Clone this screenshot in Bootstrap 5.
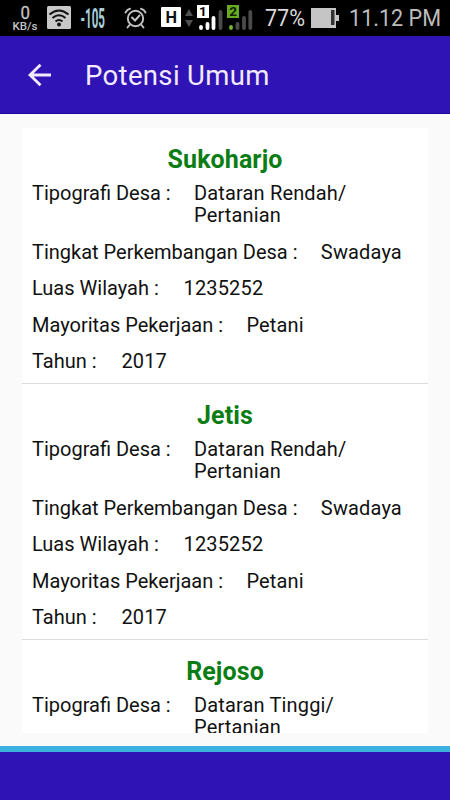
<!DOCTYPE html>
<html lang="id">
<head>
<meta charset="utf-8">
<meta name="viewport" content="width=device-width, initial-scale=1">
<title>Potensi Umum</title>
<link href="https://cdn.jsdelivr.net/npm/bootstrap@5.3.0/dist/css/bootstrap.min.css" rel="stylesheet">
<style>
body{font-family:Roboto,"Liberation Sans",sans-serif;background:#fafafa;color:#111;height:800px}
.status-bar{height:36px;background:#000}
.app-bar{height:78px;background:#3013b5;border-bottom:1px solid #21089a;color:#f3eaff}
.app-title{font-size:27.5px;line-height:36px;letter-spacing:.35px;margin-left:32px;padding-top:2px}
.back-link{margin-left:27px}
.list-area{padding:14px 22px 0;height:632px}
.village-list{height:605px;background:#fff}
.village{height:256px;padding:17px 10px 0;border-bottom:1px solid #dcdcdc}
.village-name{font-size:25px;line-height:30px;font-weight:700;letter-spacing:.1px;color:#0a7d14;margin-bottom:6.7px}
.field{font-size:20px;line-height:22.5px;margin-bottom:14px}
.field dt,.field dd{font-weight:400;white-space:pre-line}
.field dd{margin-left:23.3px;letter-spacing:.15px}
.field .numeric{margin-left:24.8px}
.bottom-bar{height:54px;background:#3013b5;border-top:6px solid #3cb0de}
</style>
<script src="https://cdn.jsdelivr.net/npm/bootstrap@5.3.0/dist/js/bootstrap.bundle.min.js"></script>
</head>
<body class="d-flex flex-column overflow-hidden m-0">
<div class="status-bar flex-shrink-0">
<svg class="d-block" width="450" height="36" viewBox="0 0 450 36" font-family="Roboto, sans-serif">
  <text x="20.500" y="18.800" font-size="18.500" fill="#c4c4c4" stroke="#c4c4c4" stroke-width=".3" textLength="9.500" lengthAdjust="spacingAndGlyphs">0</text>
  <text x="12.500" y="30" font-size="10" font-weight="500" fill="#c4c4c4" textLength="25" lengthAdjust="spacingAndGlyphs">KB/s</text>
  <rect x="47" y="6" width="24" height="23" rx="1.500" fill="#c8c8c8"/>
  <g fill="none" stroke="#111" stroke-width="2"><path d="M49.500 14.500Q59 6.500 68.500 14.500M52.500 18Q59 12.500 65.500 18M55.500 21.500Q59 18.500 62.500 21.500"/></g>
  <circle cx="59" cy="24.500" r="1.900" fill="#111"/>
  <text x="80.500" y="27.500" font-size="27" font-weight="700" fill="#a9ced9" textLength="24.500" lengthAdjust="spacingAndGlyphs">-105</text>
  <g fill="none" stroke="#c4c4c4" stroke-width="1.900" stroke-linecap="round"><circle cx="135.500" cy="18.500" r="7.700"/><path d="M125.500 12.500Q127 9.500 130 8.800M145.500 12.500Q144 9.500 141 8.800M129.500 25L127.500 27.500M141.500 25L143.500 27.500M132 17.500L135 20.500L139.500 15.500"/></g>
  <rect x="161" y="7" width="20" height="20" rx="1" fill="#fff"/>
  <text x="165.500" y="22.800" font-size="16" font-weight="700" fill="#111" textLength="11.500" lengthAdjust="spacingAndGlyphs">H</text>
  <path d="M185 16L189 9L193 16ZM185 20L189 27L193 20Z" fill="#505050"/>
  <g stroke-width="3.800" stroke-linecap="round"><path d="M201 27V28M207.500 24V28M213.500 18V28" stroke="#fff"/><path d="M220.500 12V28M237.500 24V28M244 18V28M250.300 12V28" stroke="#4b4b4b"/><path d="M231 27V28" stroke="#70b52a"/></g>
  <rect x="197" y="5" width="12" height="13" fill="#fff"/>
  <text x="199" y="16.200" font-size="13.500" font-weight="700" fill="#000">1</text>
  <rect x="227" y="5" width="12" height="13" fill="#67ab24"/>
  <text x="229.200" y="16.200" font-size="13.500" font-weight="700" fill="#102000">2</text>
  <text x="265" y="25.500" font-size="23" fill="#dadada" textLength="40" lengthAdjust="spacingAndGlyphs">77%</text>
  <path d="M311 8H336V15H339V21H336V28H311Z" fill="#c5c5c5"/><path d="M331 10H334.500V25H331Z" fill="#333"/>
  <text x="349" y="25.500" font-size="23.500" fill="#bcbcbc" textLength="92" lengthAdjust="spacingAndGlyphs">11.12 PM</text>
</svg>
</div>
<header class="app-bar d-flex align-items-center flex-shrink-0">
  <a class="back-link d-flex" href="#" aria-label="Kembali"><svg width="26" height="24" viewBox="0 0 26 24" fill="none" stroke="#f3eaff" stroke-width="2.800"><path d="M24 12H3M13.500 1.700L3 12L13.500 22.300"/></svg></a>
  <h1 class="app-title fw-normal mb-0">Potensi Umum</h1>
</header>
<main class="list-area flex-shrink-0">
  <div class="village-list overflow-hidden">
    <section class="village">
      <h2 class="village-name text-center">Sukoharjo</h2>
      <dl class="field d-flex"><dt>Tipografi Desa :</dt><dd class="mb-0">Dataran Rendah/
Pertanian</dd></dl>
      <dl class="field d-flex"><dt>Tingkat Perkembangan Desa :</dt><dd class="mb-0">Swadaya</dd></dl>
      <dl class="field d-flex"><dt>Luas Wilayah :</dt><dd class="numeric mb-0">1235252</dd></dl>
      <dl class="field d-flex"><dt>Mayoritas Pekerjaan :</dt><dd class="mb-0">Petani</dd></dl>
      <dl class="field d-flex"><dt>Tahun :</dt><dd class="numeric mb-0">2017</dd></dl>
    </section>
    <section class="village">
      <h2 class="village-name text-center">Jetis</h2>
      <dl class="field d-flex"><dt>Tipografi Desa :</dt><dd class="mb-0">Dataran Rendah/
Pertanian</dd></dl>
      <dl class="field d-flex"><dt>Tingkat Perkembangan Desa :</dt><dd class="mb-0">Swadaya</dd></dl>
      <dl class="field d-flex"><dt>Luas Wilayah :</dt><dd class="numeric mb-0">1235252</dd></dl>
      <dl class="field d-flex"><dt>Mayoritas Pekerjaan :</dt><dd class="mb-0">Petani</dd></dl>
      <dl class="field d-flex"><dt>Tahun :</dt><dd class="numeric mb-0">2017</dd></dl>
    </section>
    <section class="village">
      <h2 class="village-name text-center">Rejoso</h2>
      <dl class="field d-flex"><dt>Tipografi Desa :</dt><dd class="mb-0">Dataran Tinggi/
Pertanian</dd></dl>
    </section>
  </div>
</main>
<footer class="bottom-bar flex-shrink-0"></footer>
</body>
</html>
